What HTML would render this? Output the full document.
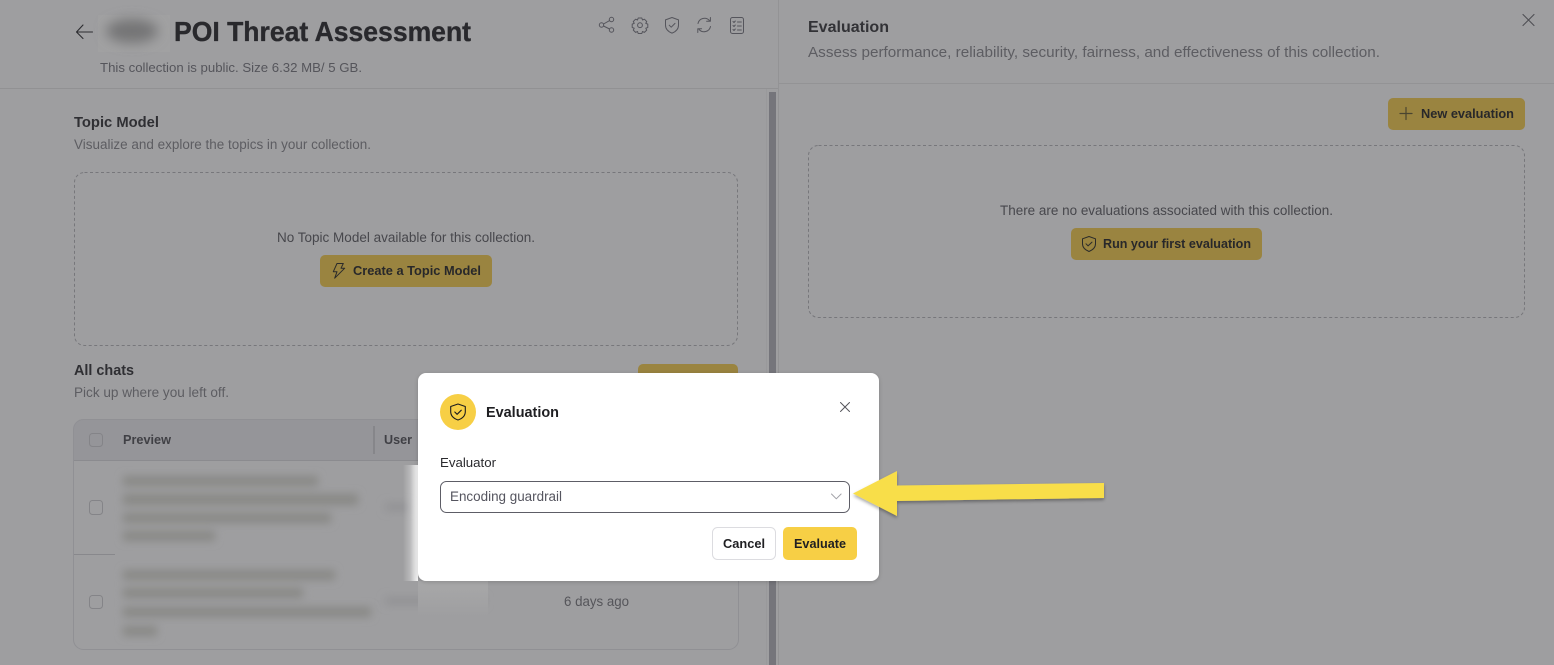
<!DOCTYPE html>
<html lang="en">
<head>
<meta charset="utf-8">
<title>POI Threat Assessment</title>
<style>
html,body{margin:0;padding:0;width:1554px;height:665px;overflow:hidden;background:#9e9ea0}
svg{display:block}
text{font-family:"Liberation Sans",sans-serif;white-space:pre}
.b{font-weight:700}
.ic{fill:none;stroke-linecap:round;stroke-linejoin:round}
</style>
</head>
<body>
<svg width="1554" height="665" viewBox="0 0 1554 665" xmlns="http://www.w3.org/2000/svg">
<defs>
<filter id="b2" x="-20%" y="-20%" width="140%" height="140%"><feGaussianBlur stdDeviation="4.200"/></filter>
<filter id="b6" x="-50%" y="-100%" width="200%" height="300%"><feGaussianBlur stdDeviation="6"/></filter>
<filter id="as" x="-10%" y="-20%" width="120%" height="150%"><feDropShadow dx="0" dy="2" stdDeviation="1.600" flood-color="#000" flood-opacity=".35"/></filter>
<filter id="ms" x="-10%" y="-10%" width="120%" height="120%"><feDropShadow dx="0" dy="1" stdDeviation="2" flood-color="#000" flood-opacity=".18"/></filter>
<linearGradient id="sm" x1="0" x2="1" y1="0" y2="0"><stop offset="0" stop-color="#fff" stop-opacity="0"/><stop offset=".5" stop-color="#fff" stop-opacity=".3"/><stop offset="1" stop-color="#fff" stop-opacity=".95"/></linearGradient>
<linearGradient id="pt" x1="0" x2="0" y1="0" y2="1"><stop offset="0" stop-color="#a8a8a9"/><stop offset="1" stop-color="#9e9ea0"/></linearGradient>
</defs>

<rect width="1554" height="665" fill="#9e9ea0"/>

<!-- panel structure -->
<rect x="0" y="88" width="778" height="1" fill="#919193"/>
<rect x="778" y="0" width="1" height="665" fill="#939395"/>
<rect x="779" y="83" width="775" height="1" fill="#939395"/>
<rect x="769" y="92" width="7" height="573" fill="#75757b"/>
<rect x="766" y="89" width="1" height="576" fill="#99999b"/>

<!-- left header -->
<g class="ic" stroke="#2c2c30" stroke-width="1.100"><path d="M92.500 32H76.500M83 25L76.500 32L83 38.500"/></g>
<rect x="98" y="15" width="72" height="37" fill="#a1a1a2"/>
<ellipse cx="132" cy="31" rx="26" ry="12" fill="#747476" filter="url(#b6)"/>
<text class="b" x="174" y="41" font-size="28" fill="#29292d" stroke="#29292d" stroke-width=".35" textLength="297" lengthAdjust="spacingAndGlyphs">POI Threat Assessment</text>
<text x="100" y="72" font-size="13" fill="#55555b" textLength="262" lengthAdjust="spacingAndGlyphs">This collection is public. Size 6.32 MB/ 5 GB.</text>

<!-- toolbar icons -->
<g class="ic" stroke="#55555c" stroke-width="1">
  <circle cx="601.500" cy="25" r="2.200"/><circle cx="611.500" cy="19.500" r="2.200"/><circle cx="611.500" cy="30" r="2.200"/>
  <path d="M603.500 24L609.600 20.600M603.500 26L609.600 29"/>
  <path d="M638.200 18h3.600l.7 2 1.900-.8 2.300 2.300-.9 1.900 2 .7v3.400l-2 .7.9 1.900-2.300 2.300-1.900-.9-.7 2h-3.600l-.7-2-1.900.9-2.300-2.300.9-1.900-2-.7v-3.400l2-.7-.9-1.900 2.300-2.300 1.900.8z"/>
  <circle cx="640" cy="25.200" r="2.400"/>
  <path d="M672 17.500l6.500 2.400v5.200c0 4-2.900 6.600-6.500 8-3.600-1.400-6.500-4-6.500-8v-5.200z"/>
  <path d="M669.200 25.200l2 2 3.800-3.800"/>
  <path d="M698 23.500a6.600 6.600 0 0 1 11.400-3M710.400 17.500v3.800h-3.800M710.500 26.500a6.600 6.600 0 0 1-11.400 3M697.800 32.500v-3.800h3.800"/>
  <rect x="730.500" y="17.500" width="13" height="16" rx="2"/>
  <path d="M733 21.500l1 1 1.300-1.500M733 25.500l1 1 1.300-1.500M733 29.500l1 1 1.300-1.500M737.500 22h3.800M737.500 26h3.800M737.500 30h3.800"/>
</g>

<!-- topic model -->
<text class="b" x="74" y="127" font-size="14.500" fill="#2f2f33" textLength="85" lengthAdjust="spacingAndGlyphs">Topic Model</text>
<text x="74" y="149" font-size="13.400" fill="#5d5d62" textLength="297" lengthAdjust="spacingAndGlyphs">Visualize and explore the topics in your collection.</text>
<rect x="74.500" y="172.500" width="663" height="173" rx="10" fill="none" stroke="#77777b" stroke-width="1" stroke-dasharray="3 2.500"/>
<text x="277" y="242" font-size="13.400" fill="#47474c" textLength="258" lengthAdjust="spacingAndGlyphs">No Topic Model available for this collection.</text>
<rect x="320" y="255" width="172" height="32" rx="5" fill="#9a8440"/>
<path class="ic" stroke="#2b2b2a" stroke-width="1" d="M337 263.500h6.300l-2.300 4.700h3.700l-10 10 2.300-6.500h-3.700z"/>
<text class="b" x="353" y="275" font-size="12.800" fill="#28282a" textLength="128" lengthAdjust="spacingAndGlyphs">Create a Topic Model</text>

<!-- all chats -->
<text class="b" x="74" y="375" font-size="14.500" fill="#2f2f33" textLength="60" lengthAdjust="spacingAndGlyphs">All chats</text>
<text x="74" y="397" font-size="13.400" fill="#5d5d62" textLength="155" lengthAdjust="spacingAndGlyphs">Pick up where you left off.</text>
<rect x="638" y="364" width="100" height="40" rx="5" fill="#9a8440"/>

<!-- table -->
<path d="M74 460V429a10 10 0 0 1 10-10H728a10 10 0 0 1 10 10V460z" fill="#959599"/>
<rect x="73.500" y="419.500" width="665" height="230" rx="10" fill="none" stroke="#909094"/>
<rect x="74" y="460" width="664" height="1" fill="#8b8b8f"/>
<rect x="373" y="426" width="2" height="28" fill="#86868a"/>
<text class="b" x="123" y="444" font-size="12.800" fill="#404045" textLength="48" lengthAdjust="spacingAndGlyphs">Preview</text>
<text class="b" x="384" y="444" font-size="12.800" fill="#404045" textLength="28" lengthAdjust="spacingAndGlyphs">User</text>
<g fill="none" stroke="#848488" stroke-width="1">
  <rect x="89.500" y="433.500" width="13" height="13" rx="3"/>
  <rect x="89.500" y="500.500" width="13" height="14" rx="3"/>
  <rect x="89.500" y="595.500" width="13" height="13" rx="3"/>
</g>
<rect x="74" y="554" width="41" height="1" fill="#88888c"/>
<rect x="115" y="465" width="303" height="180" fill="#9e9ea0"/>

<!-- blurred preview -->
<g fill="#888885" filter="url(#b2)">
  <rect x="123" y="476" width="195" height="10"/>
  <rect x="123" y="494" width="235" height="11"/>
  <rect x="123" y="513" width="208" height="10"/>
  <rect x="123" y="531" width="92" height="10"/>
  <rect x="123" y="570" width="212" height="10"/>
  <rect x="123" y="588" width="180" height="10"/>
  <rect x="123" y="607" width="248" height="10"/>
  <rect x="123" y="626" width="34" height="10"/>
</g>
<g fill="#929294" filter="url(#b2)">
  <rect x="385" y="503" width="25" height="8"/>
  <rect x="385" y="597" width="100" height="8"/>
</g>
<rect x="403" y="465" width="15" height="116" fill="url(#sm)"/>
<rect x="418" y="581" width="70" height="36" fill="url(#pt)"/>
<text x="564" y="606" font-size="13.400" fill="#55555a" textLength="65" lengthAdjust="spacingAndGlyphs">6 days ago</text>

<!-- right panel -->
<text class="b" x="808" y="32" font-size="16" fill="#323236" textLength="81" lengthAdjust="spacingAndGlyphs">Evaluation</text>
<text x="808" y="57" font-size="14.800" fill="#5d5d62" textLength="572" lengthAdjust="spacingAndGlyphs">Assess performance, reliability, security, fairness, and effectiveness of this collection.</text>
<path class="ic" stroke="#4f4f54" stroke-width="1.100" d="M1523 14.500L1534 25.500M1534 14.500L1523 25.500"/>
<rect x="1388" y="98" width="137" height="32" rx="5" fill="#9a8440"/>
<path class="ic" stroke="#4a4530" stroke-width="1.200" d="M1406 107.500v12M1400 113.500h12"/>
<text class="b" x="1421" y="118" font-size="12.800" fill="#28282a" textLength="93" lengthAdjust="spacingAndGlyphs">New evaluation</text>
<rect x="808.500" y="145.500" width="716" height="172" rx="10" fill="none" stroke="#77777b" stroke-width="1" stroke-dasharray="3 2.500"/>
<text x="1000" y="215" font-size="13.400" fill="#47474c" textLength="333" lengthAdjust="spacingAndGlyphs">There are no evaluations associated with this collection.</text>
<rect x="1071" y="228" width="191" height="32" rx="5" fill="#9a8440"/>
<g class="ic" stroke="#2b2b2a" stroke-width="1">
  <path d="M1089 236.500l6.500 2.300v5c0 3.800-2.800 6.200-6.500 7.700-3.700-1.500-6.500-3.900-6.500-7.700v-5z"/>
  <path d="M1086 243.800l2.100 2.100 3.900-3.800"/>
</g>
<text class="b" x="1103" y="248" font-size="12.800" fill="#28282a" textLength="148" lengthAdjust="spacingAndGlyphs">Run your first evaluation</text>

<!-- modal -->
<rect x="418" y="373" width="461" height="208" rx="8" fill="#fff" filter="url(#ms)"/>
<circle cx="458" cy="412" r="18" fill="#f7cf45"/>
<g class="ic" stroke="#1c1c1e" stroke-width="1.100">
  <path d="M458 404l7.300 2.500v5.100c0 4.200-3.100 6.900-7.300 8.400-4.200-1.500-7.300-4.200-7.300-8.400v-5.100z"/>
  <path d="M454.800 412l2.300 2.300 4.200-4.100"/>
</g>
<text class="b" x="486" y="417" font-size="14.500" fill="#1f1f22" textLength="73" lengthAdjust="spacingAndGlyphs">Evaluation</text>
<path class="ic" stroke="#55555b" stroke-width="1" d="M840.500 402.500l9 9M849.500 402.500l-9 9"/>
<text x="440" y="467" font-size="13" fill="#2a2a2e" textLength="56" lengthAdjust="spacingAndGlyphs">Evaluator</text>
<rect x="440.500" y="481.500" width="409" height="31" rx="6" fill="#fff" stroke="#5d5d66"/>
<text x="450" y="501" font-size="13.400" fill="#55555f" textLength="112" lengthAdjust="spacingAndGlyphs">Encoding guardrail</text>
<path class="ic" stroke="#a2a2a8" stroke-width="1" d="M831.500 494l4.800 4.800 4.800-4.800"/>
<rect x="712.500" y="527.500" width="63" height="32" rx="5" fill="#fff" stroke="#dcdce0"/>
<text class="b" x="723" y="548" font-size="12.800" fill="#1f1f22" textLength="42" lengthAdjust="spacingAndGlyphs">Cancel</text>
<rect x="783" y="527" width="74" height="33" rx="5" fill="#f7cf45"/>
<text class="b" x="794" y="548" font-size="12.800" fill="#1f1f22" textLength="52" lengthAdjust="spacingAndGlyphs">Evaluate</text>

<!-- arrow -->
<path d="M853 493.500L897 471V485.500L1104 483V498L897 501V516z" fill="#f8de4a" filter="url(#as)"/>
</svg>
</body>
</html>
